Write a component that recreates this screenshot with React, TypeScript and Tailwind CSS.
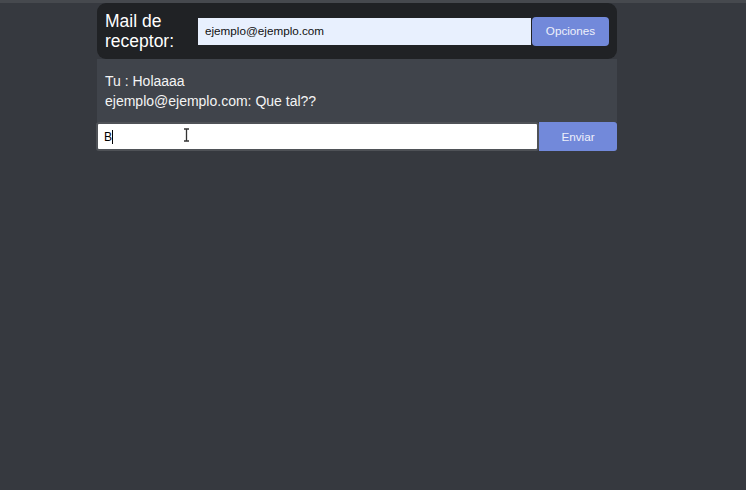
export default function App() {
  return (
    <div className="min-h-[490px] w-full bg-[#36393f] font-['Liberation_Sans',Arial,sans-serif] border-t-[3px] border-[#46494e]">
      <div className="ml-[96px] w-[521px] flex flex-col">
        <div className="ml-[1px] flex items-center h-[56px] rounded-[9px] bg-[#202225] pl-[8px] pr-[8px]">
          <div className="w-[93px] text-[17.5px] leading-[20px] text-white">
            Mail de
            <br />
            receptor:
          </div>
          <div className="flex-1 h-[27px] flex items-center bg-[#e8f0fe] px-[7px] text-[11.7px] text-[#111]">
            ejemplo@ejemplo.com
          </div>
          <button className="h-[29px] w-[77px] ml-[1px] rounded-[4px] bg-[#7289da] text-[11.7px] text-[#eef0fa]">
            Opciones
          </button>
        </div>
        <div className="ml-[1px] bg-[#40444b] pl-[8px] pt-[12px] pb-[11px] text-[14px] leading-[20px] text-[#f4f4f4]">
          <div>Tu : Holaaaa</div>
          <div>ejemplo@ejemplo.com: Que tal??</div>
        </div>
        <div className="flex h-[29px]">
          <div className="relative flex-1 flex items-center rounded-[3px] border-2 border-[#4f5257] bg-white pl-[6px] text-[12px] text-black">
            <span>B</span>
            <span className="w-[1px] h-[14px] bg-black" />
            <svg className="absolute left-[85px] top-[4px]" width="7" height="14" viewBox="0 0 7 14">
              <path d="M1 1h5M3.5 1v12M1 13h5" stroke="#333" strokeWidth="1.3" fill="none" />
            </svg>
          </div>
          <button className="w-[78px] rounded-r-[3px] bg-[#7289da] text-[11.7px] text-[#eef0fa]">
            Enviar
          </button>
        </div>
      </div>
    </div>
  );
}
